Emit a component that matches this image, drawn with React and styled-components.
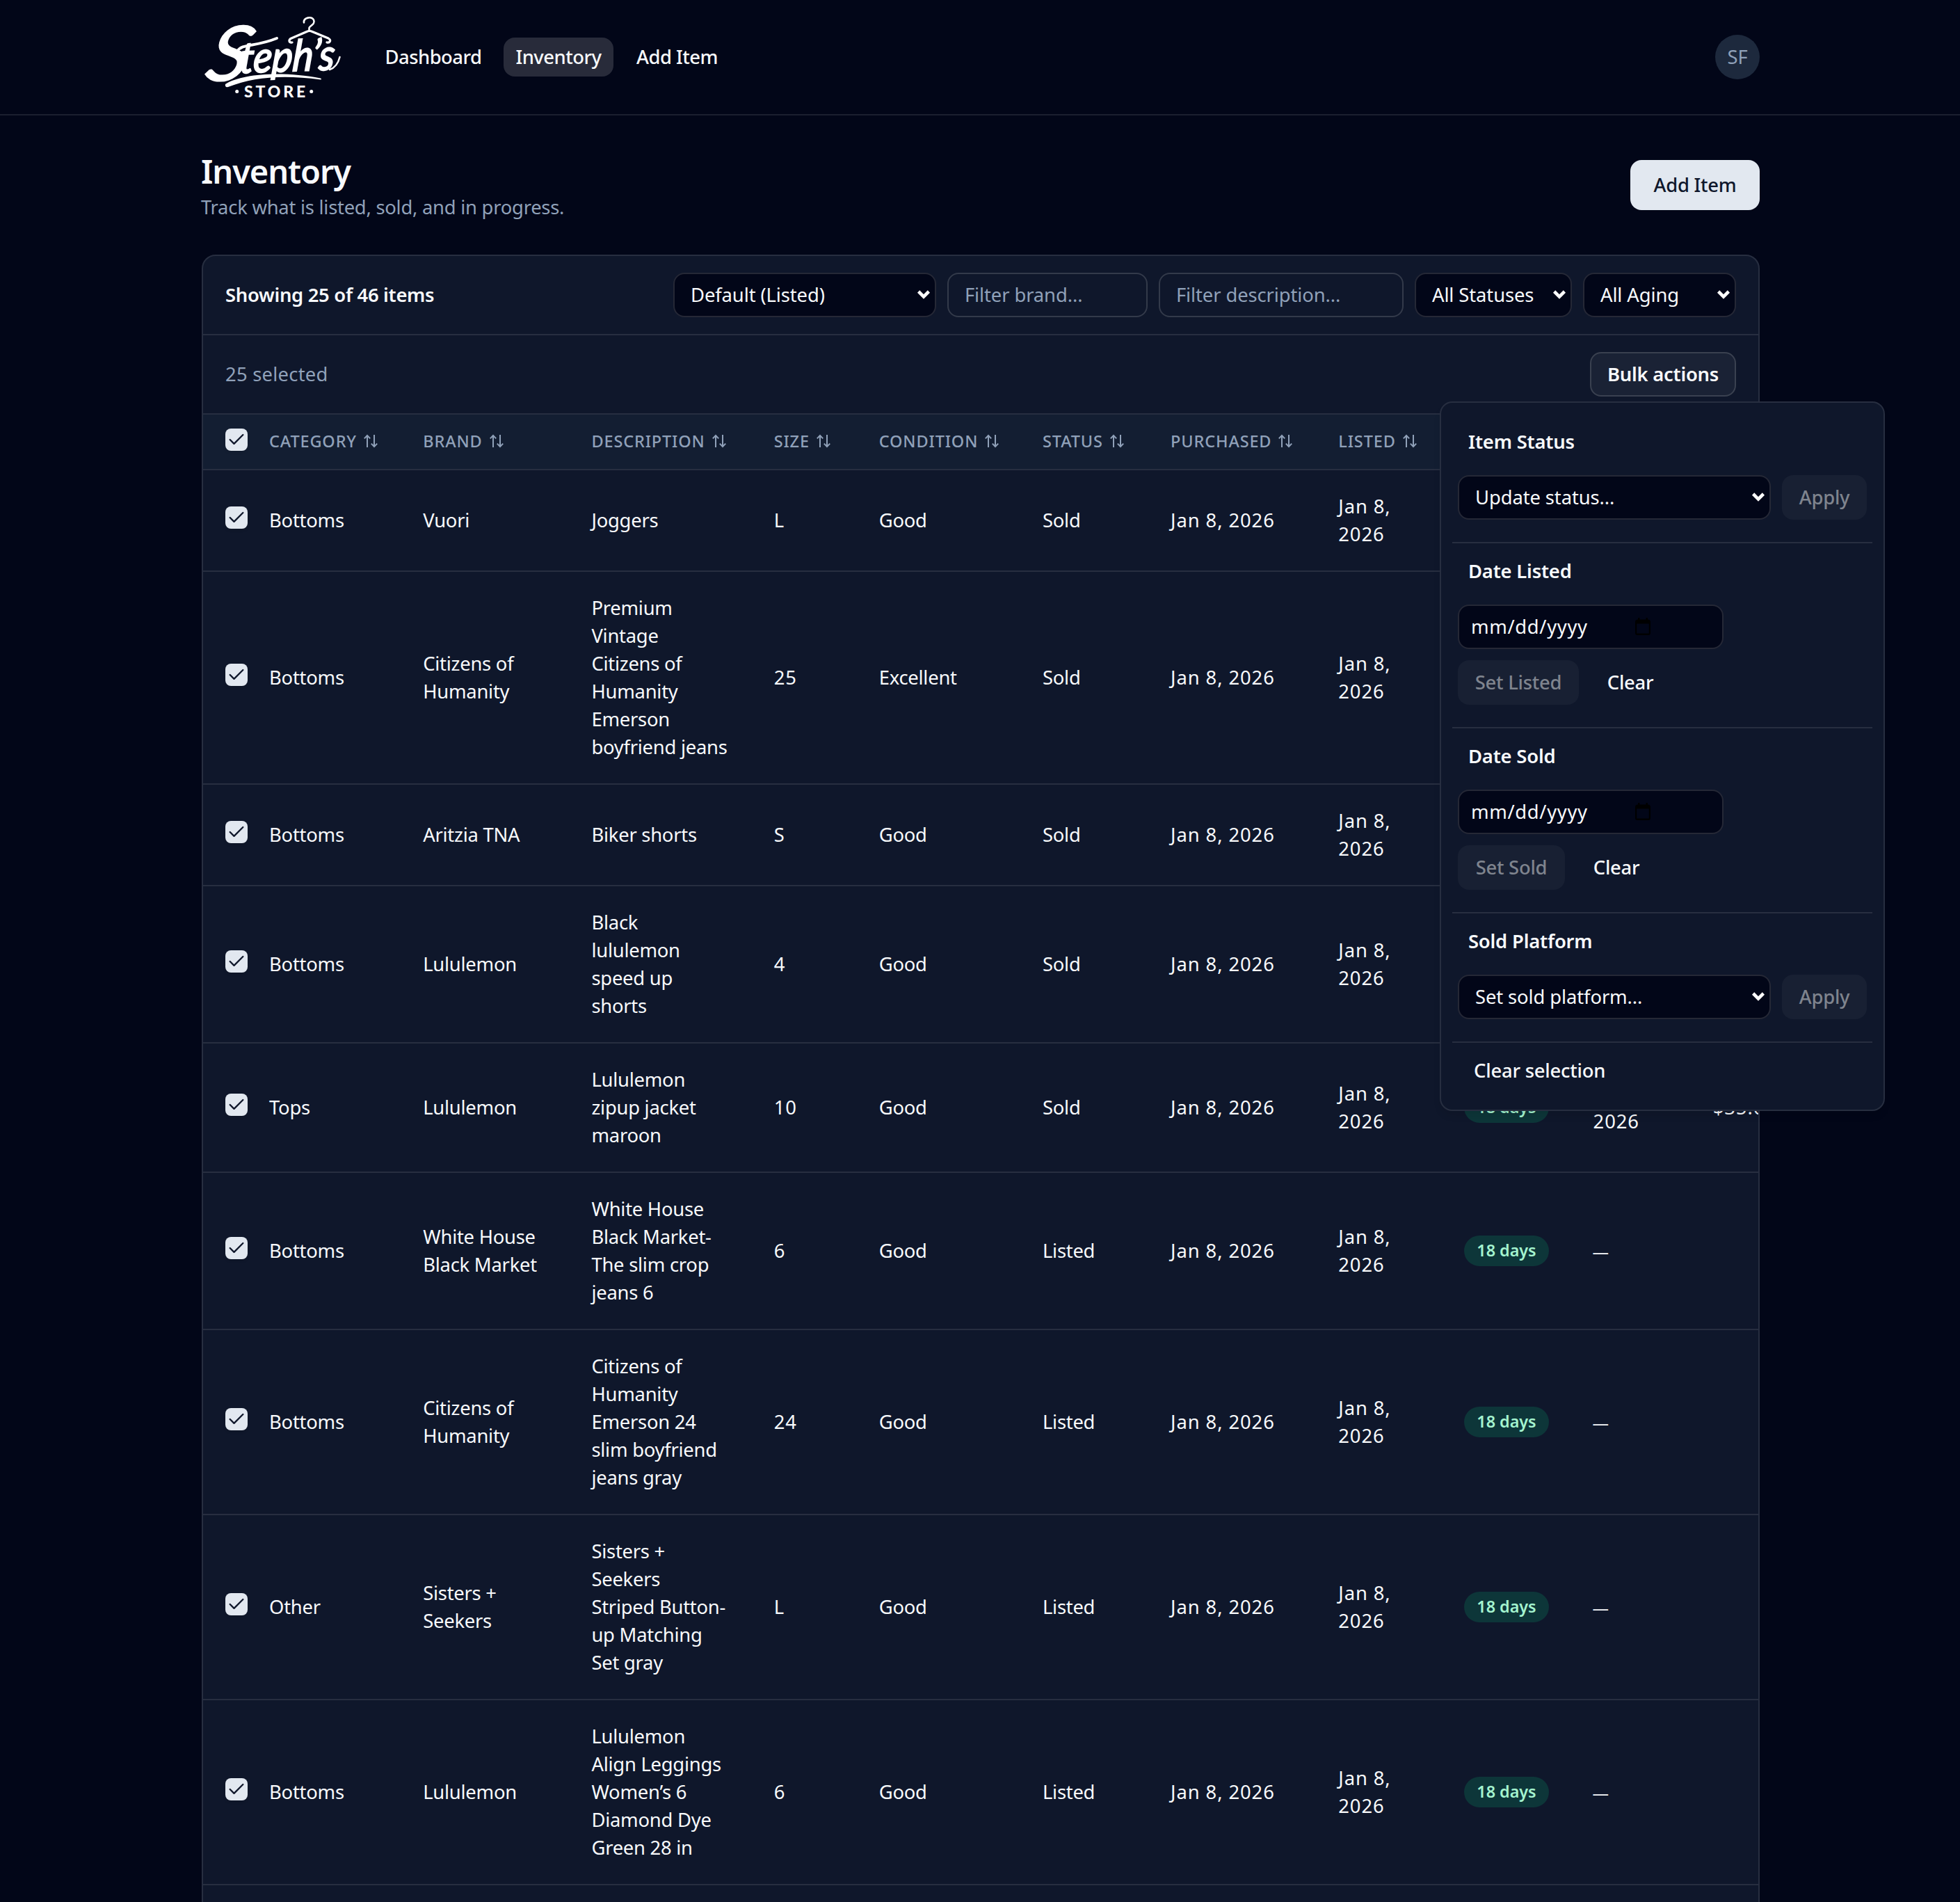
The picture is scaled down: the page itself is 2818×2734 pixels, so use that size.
import React, { useState } from "react";
import styled, { createGlobalStyle } from "styled-components";
import { Check } from "lucide-react";

const color = {
  background: "#020618",
  card: "#0f172b",
  head: "#131e32",
  foreground: "#f8fafc",
  muted: "#90a1b9",
  primary: "#e2e8f0",
  line: "#272e40",
  inputLine: "#333a4a",
};

const GlobalStyle = createGlobalStyle`
  * {
    box-sizing: border-box;
  }

  body {
    margin: 0;
    background: ${color.background};
    color: ${color.foreground};
    font-family: "Noto Sans", "Open Sans", sans-serif;
    font-size: 27.4px;
    line-height: 40px;
    letter-spacing: -0.25px;
  }

  button {
    font: inherit;
    letter-spacing: inherit;
    color: inherit;
  }
`;

const Page = styled.div`
  height: 2734px;
  overflow: hidden;
`;

const Header = styled.header`
  display: flex;
  align-items: center;
  height: 166px;
  padding: 0 288px 0 290px;
  border-bottom: 2px solid #1b1f2f;
`;

const LogoSvg = styled.svg`
  width: 200px;
  height: 120px;
  margin-right: 48px;
  overflow: visible;
`;

const Nav = styled.nav`
  display: flex;
  flex: 1;
  gap: 16px;
`;

const NavLink = styled.a`
  width: ${props => props.$width}px;
  padding: 8px 0;
  border-radius: 16px;
  background: ${props => (props.$active ? "#282b3a" : "transparent")};
  font-weight: 550;
  letter-spacing: -0.5px;
  text-align: center;
`;

const Avatar = styled.div`
  width: 64px;
  height: 64px;
  border-radius: 50%;
  background: #1d293d;
  color: ${color.muted};
  line-height: 64px;
  text-align: center;
`;

const Main = styled.main`
  padding: 60px 288px 0 290px;
`;

const TitleRow = styled.div`
  display: flex;
  align-items: center;
  justify-content: space-between;
  height: 80px;
  margin-bottom: 60px;
`;

const Heading = styled.div`
  padding-top: 4px;
`;

const Title = styled.h1`
  margin: 0 0 4px -1px;
  font-size: 47px;
  font-weight: 620;
  line-height: 56px;
  letter-spacing: -1.1px;
`;

const Subtitle = styled.p`
  margin: 0 0 0 -1px;
  color: ${color.muted};
`;

const PrimaryButton = styled.button`
  width: 186px;
  height: 72px;
  border: 0;
  border-radius: 16px;
  background: ${color.primary};
  color: ${color.card};
  font-weight: 500;
`;

const Card = styled.section`
  height: 2500px;
  border: 2px solid ${color.line};
  border-radius: 20px;
  background: ${color.card};
`;

const Toolbar = styled.div`
  display: flex;
  align-items: center;
  justify-content: space-between;
  height: 114px;
  padding: 0 32px;
  border-bottom: 2px solid ${color.line};
`;

const Showing = styled.div`
  font-weight: 560;
  letter-spacing: -0.3px;
`;

const Filters = styled.div`
  display: flex;
  gap: 16px;
`;

const Field = styled.div`
  display: flex;
  align-items: center;
  justify-content: space-between;
  width: ${props => props.$width}px;
  height: 64px;
  padding: 0 6px 0 23px;
  border: 2px solid ${props => (props.$outline ? color.inputLine : "#252836")};
  border-radius: 16px;
  background: ${props => (props.$outline ? "transparent" : color.background)};
  color: ${props => (props.$outline ? color.muted : color.foreground)};
  letter-spacing: -0.1px;
`;

const DateField = styled(Field)`
  padding: 0 103px 0 17px;
  letter-spacing: 0.65px;
`;

const Selected = styled.div`
  color: ${color.muted};
  letter-spacing: 0.25px;
`;

const BulkWrapper = styled.div`
  position: relative;
`;

const BulkButton = styled.button`
  display: block;
  width: 210px;
  height: 64px;
  padding: 0;
  border: 2px solid #3a4150;
  border-radius: 16px;
  background: #1a2235;
  font-weight: 560;
`;

const Popover = styled.div`
  position: absolute;
  top: 71px;
  left: -216px;
  z-index: 10;
  width: 640px;
  padding: 16px;
  border: 2px solid ${color.line};
  border-radius: 18px;
  background: ${color.card};
  box-shadow: 0 8px 12px -2px rgba(0, 0, 0, 0.1);
`;

const Group = styled.div`
  padding: 20px 8px 32px;
  border-bottom: 2px solid ${color.line};
`;

const GroupLabel = styled.div`
  margin: 0 0 28px 15px;
  font-weight: 570;
  letter-spacing: -0.2px;
`;

const GroupRow = styled.div`
  display: flex;
  gap: 16px;

  & + & {
    margin-top: 16px;
  }
`;

const MenuButton = styled.button`
  width: ${props => props.$width}px;
  height: 64px;
  padding: 0;
  border: 0;
  border-radius: 16px;
  background: ${props => (props.$ghost ? "transparent" : "#182033")};
  color: ${props => (props.$ghost ? color.foreground : "#7f848e")};
  font-weight: 550;
`;

const ClearSelection = styled(MenuButton)`
  display: block;
  margin: 8px 0 8px 8px;
  padding-left: 23px;
  letter-spacing: -0.2px;
  text-align: left;
`;

const TableWrapper = styled.div`
  overflow: hidden;
`;

const Table = styled.table`
  width: 2376px;
  table-layout: fixed;
  border-collapse: separate;
  border-spacing: 0;
`;

const HeadCell = styled.th`
  height: 80px;
  padding: 0 0 0 ${props => (props.$first ? 16 : 17)}px;
  border-bottom: 2px solid ${color.line};
  background: ${color.head};
  color: ${color.muted};
  font-size: 23.5px;
  font-weight: 540;
  letter-spacing: 0.85px;
  text-align: left;
  white-space: nowrap;
`;

const HeadLabel = styled.span`
  display: inline-flex;
  align-items: center;
  gap: 10px;
  padding-bottom: 3px;
  vertical-align: middle;
`;

const Cell = styled.td`
  padding: 32px 0 32px ${props => props.$inset || 17}px;
  border-bottom: 2px solid ${color.line};
  letter-spacing: ${props => (props.$numeric ? "0.9px" : "-0.25px")};
  white-space: pre;
`;

const CheckSlot = styled.div`
  padding: 0 0 ${props => props.$lift}px 16px;
`;

const CheckBox = styled.div`
  display: flex;
  align-items: center;
  justify-content: center;
  width: 32px;
  height: 32px;
  border-radius: 8px;
  background: ${color.primary};
  color: ${color.card};
  box-shadow: 0 2px 4px rgba(0, 0, 0, 0.1);
`;

const Badge = styled.span`
  display: block;
  width: 122px;
  height: 44px;
  padding-right: 1px;
  border-radius: 22px;
  background: #0d3639;
  color: #a4f4cf;
  font-size: 23.4px;
  font-weight: 600;
  line-height: 43px;
  letter-spacing: -0.05px;
  text-align: center;
`;

const Dash = styled.span`
  margin-left: -1px;
  font-size: 23.5px;
`;

const columns = [
  ["Category", 221],
  ["Brand", 242],
  ["Description", 262],
  ["Size", 151],
  ["Condition", 235],
  ["Status", 184],
  ["Purchased", 241],
  ["Listed", 182],
  ["Aging", 186],
  ["Sold", 172],
  ["Price", 220],
];

const items = [
  ["Bottoms", "Vuori", "Joggers", "L", "Good", "Sold"],
  [
    "Bottoms",
    "Citizens of\nHumanity",
    "Premium\nVintage\nCitizens of\nHumanity\nEmerson\nboyfriend jeans",
    "25",
    "Excellent",
    "Sold",
  ],
  ["Bottoms", "Aritzia TNA", "Biker shorts", "S", "Good", "Sold"],
  ["Bottoms", "Lululemon", "Black\nlululemon\nspeed up\nshorts", "4", "Good", "Sold"],
  ["Tops", "Lululemon", "Lululemon\nzipup jacket\nmaroon", "10", "Good", "Sold"],
  [
    "Bottoms",
    "White House\nBlack Market",
    "White House\nBlack Market-\nThe slim crop\njeans 6",
    "6",
    "Good",
    "Listed",
  ],
  [
    "Bottoms",
    "Citizens of\nHumanity",
    "Citizens of\nHumanity\nEmerson 24\nslim boyfriend\njeans gray",
    "24",
    "Good",
    "Listed",
  ],
  [
    "Other",
    "Sisters +\nSeekers",
    "Sisters +\nSeekers\nStriped Button-\nup Matching\nSet gray",
    "L",
    "Good",
    "Listed",
  ],
  [
    "Bottoms",
    "Lululemon",
    "Lululemon\nAlign Leggings\nWomen’s 6\nDiamond Dye\nGreen 28 in",
    "6",
    "Good",
    "Listed",
  ],
];

const Logo = () => (
  <LogoSvg viewBox="0 0 200 120" fill="#fff" role="img">
    <g fontFamily="Lato, sans-serif" fontStyle="italic" stroke="#fff">
      <text
        fontSize="110"
        strokeWidth="1.5"
        textLength="60"
        lengthAdjust="spacingAndGlyphs"
        transform="translate(2 94) skewX(-14)"
      >
        S
      </text>
      <text
        fontSize="62"
        strokeWidth="2"
        textLength="136"
        lengthAdjust="spacingAndGlyphs"
        transform="translate(54 83) rotate(-2) skewX(-6)"
      >
        teph’s
      </text>
    </g>
    <g fill="none" stroke="#fff" strokeLinecap="round" strokeLinejoin="round">
      <path d="M147 10.5C146 3 158 1 161 6.5C164 13 155 15 154.5 18V22" strokeWidth="2.6" />
      <path
        d="M130 39C125 39.5 124.5 35 129 33L151 23.5Q155 21.5 159 23.5L182 33C187 36 184 40 180 39"
        strokeWidth="3.2"
      />
      <path d="M51 52C58 40 76 46 108 33" strokeWidth="4" />
      <path d="M184 78C193 75 197 66 198.5 60" strokeWidth="2.5" />
    </g>
    <path d="M34 99C58 84 115 80 171 90.5Q173 92 171 92.5C115 85 75 89 38 103Q33 104 34 99Z" />
    <text x="61" y="118" fontFamily="Lato, sans-serif" fontWeight="900" fontSize="23" textLength="88">
      STORE
    </text>
    <circle cx="50.7" cy="109.5" r="2.5" />
    <circle cx="157.7" cy="109.5" r="2.5" />
  </LogoSvg>
);

const Chevron = () => (
  <svg width="20" height="14" viewBox="0 0 20 14" fill="none" stroke="#fff" strokeWidth="4.6">
    <path d="M2.6 2L10 9.4L17.4 2" />
  </svg>
);

const SortIcon = () => (
  <svg width="20" height="20" viewBox="0 0 20 20" fill="none" stroke="currentColor" strokeWidth="2">
    <path d="M5 19V2M0.8 6.4L5 2L9.2 6.4M15 1V18M10.8 13.6L15 18L19.2 13.6" />
  </svg>
);

const CalendarIcon = () => (
  <svg width="22" height="26" viewBox="0 0 22 26" fill="#000">
    <path
      d="M4 0H6.5V2.5H15.5V0H18V2.5Q22 2.5 22 6V21.5Q22 25 18.5 25H3.5Q0 25 0 21.5V6Q0 2.5 4 2.5ZM2.2 8.5V22.5H19.8V8.5Z"
      fillRule="evenodd"
    />
  </svg>
);

const Select = props => (
  <Field $width={props.width}>
    {props.label}
    <Chevron />
  </Field>
);

const DateInput = () => (
  <DateField $width={382}>
    mm/dd/yyyy
    <CalendarIcon />
  </DateField>
);

const Checked = props => (
  <CheckSlot $lift={props.lift}>
    <CheckBox>
      <Check size={28} strokeWidth={2} />
    </CheckBox>
  </CheckSlot>
);

const BulkMenu = () => (
  <Popover>
    <Group>
      <GroupLabel>Item Status</GroupLabel>
      <GroupRow>
        <Select width={450} label="Update status..." />
        <MenuButton $width={122}>Apply</MenuButton>
      </GroupRow>
    </Group>
    <Group>
      <GroupLabel>Date Listed</GroupLabel>
      <GroupRow>
        <DateInput />
      </GroupRow>
      <GroupRow>
        <MenuButton $width={174}>Set Listed</MenuButton>
        <MenuButton $width={116} $ghost>
          Clear
        </MenuButton>
      </GroupRow>
    </Group>
    <Group>
      <GroupLabel>Date Sold</GroupLabel>
      <GroupRow>
        <DateInput />
      </GroupRow>
      <GroupRow>
        <MenuButton $width={154}>Set Sold</MenuButton>
        <MenuButton $width={116} $ghost>
          Clear
        </MenuButton>
      </GroupRow>
    </Group>
    <Group>
      <GroupLabel>Sold Platform</GroupLabel>
      <GroupRow>
        <Select width={450} label="Set sold platform..." />
        <MenuButton $width={122}>Apply</MenuButton>
      </GroupRow>
    </Group>
    <ClearSelection $width={580} $ghost>
      Clear selection
    </ClearSelection>
  </Popover>
);

const InventoryTable = () => (
  <Table>
    <colgroup>
      <col width="78" />
      {columns.map(([name, width]) => (
        <col key={name} width={width} />
      ))}
    </colgroup>
    <thead>
      <tr>
        <HeadCell $first>
          <Checked lift={6} />
        </HeadCell>
        {columns.map(([name]) => (
          <HeadCell key={name}>
            <HeadLabel>
              {name.toUpperCase()}
              <SortIcon />
            </HeadLabel>
          </HeadCell>
        ))}
      </tr>
    </thead>
    <tbody>
      {items.map(([category, brand, description, size, condition, status], i) => (
        <tr key={i}>
          <Cell $inset={16}>
            <Checked lift={8} />
          </Cell>
          <Cell>{category}</Cell>
          <Cell>{brand}</Cell>
          <Cell>{description}</Cell>
          <Cell $numeric>{size}</Cell>
          <Cell>{condition}</Cell>
          <Cell>{status}</Cell>
          <Cell $numeric>Jan 8, 2026</Cell>
          <Cell $numeric>{"Jan 8,\n2026"}</Cell>
          <Cell $inset={16}>
            <Badge>18 days</Badge>
          </Cell>
          <Cell $numeric $inset={15}>
            {status === "Sold" ? "Jan 8,\n2026" : <Dash>—</Dash>}
          </Cell>
          <Cell $numeric $inset={15}>
            {status === "Sold" ? "$35.00" : ""}
          </Cell>
        </tr>
      ))}
    </tbody>
  </Table>
);

export default function App() {
  const [open, setOpen] = useState(true);

  return (
    <Page>
      <GlobalStyle />
      <Header>
        <Logo />
        <Nav>
          <NavLink $width={170}>Dashboard</NavLink>
          <NavLink $width={158} $active>
            Inventory
          </NavLink>
          <NavLink $width={151}>Add Item</NavLink>
        </Nav>
        <Avatar>SF</Avatar>
      </Header>
      <Main>
        <TitleRow>
          <Heading>
            <Title>Inventory</Title>
            <Subtitle>Track what is listed, sold, and in progress.</Subtitle>
          </Heading>
          <PrimaryButton>Add Item</PrimaryButton>
        </TitleRow>
        <Card>
          <Toolbar>
            <Showing>Showing 25 of 46 items</Showing>
            <Filters>
              <Select width={378} label="Default (Listed)" />
              <Field $width={288} $outline>
                Filter brand...
              </Field>
              <Field $width={352} $outline>
                Filter description...
              </Field>
              <Select width={226} label="All Statuses" />
              <Select width={220} label="All Aging" />
            </Filters>
          </Toolbar>
          <Toolbar>
            <Selected>25 selected</Selected>
            <BulkWrapper>
              <BulkButton onClick={() => setOpen(!open)}>Bulk actions</BulkButton>
              {open && <BulkMenu />}
            </BulkWrapper>
          </Toolbar>
          <TableWrapper>
            <InventoryTable />
          </TableWrapper>
        </Card>
      </Main>
    </Page>
  );
}
